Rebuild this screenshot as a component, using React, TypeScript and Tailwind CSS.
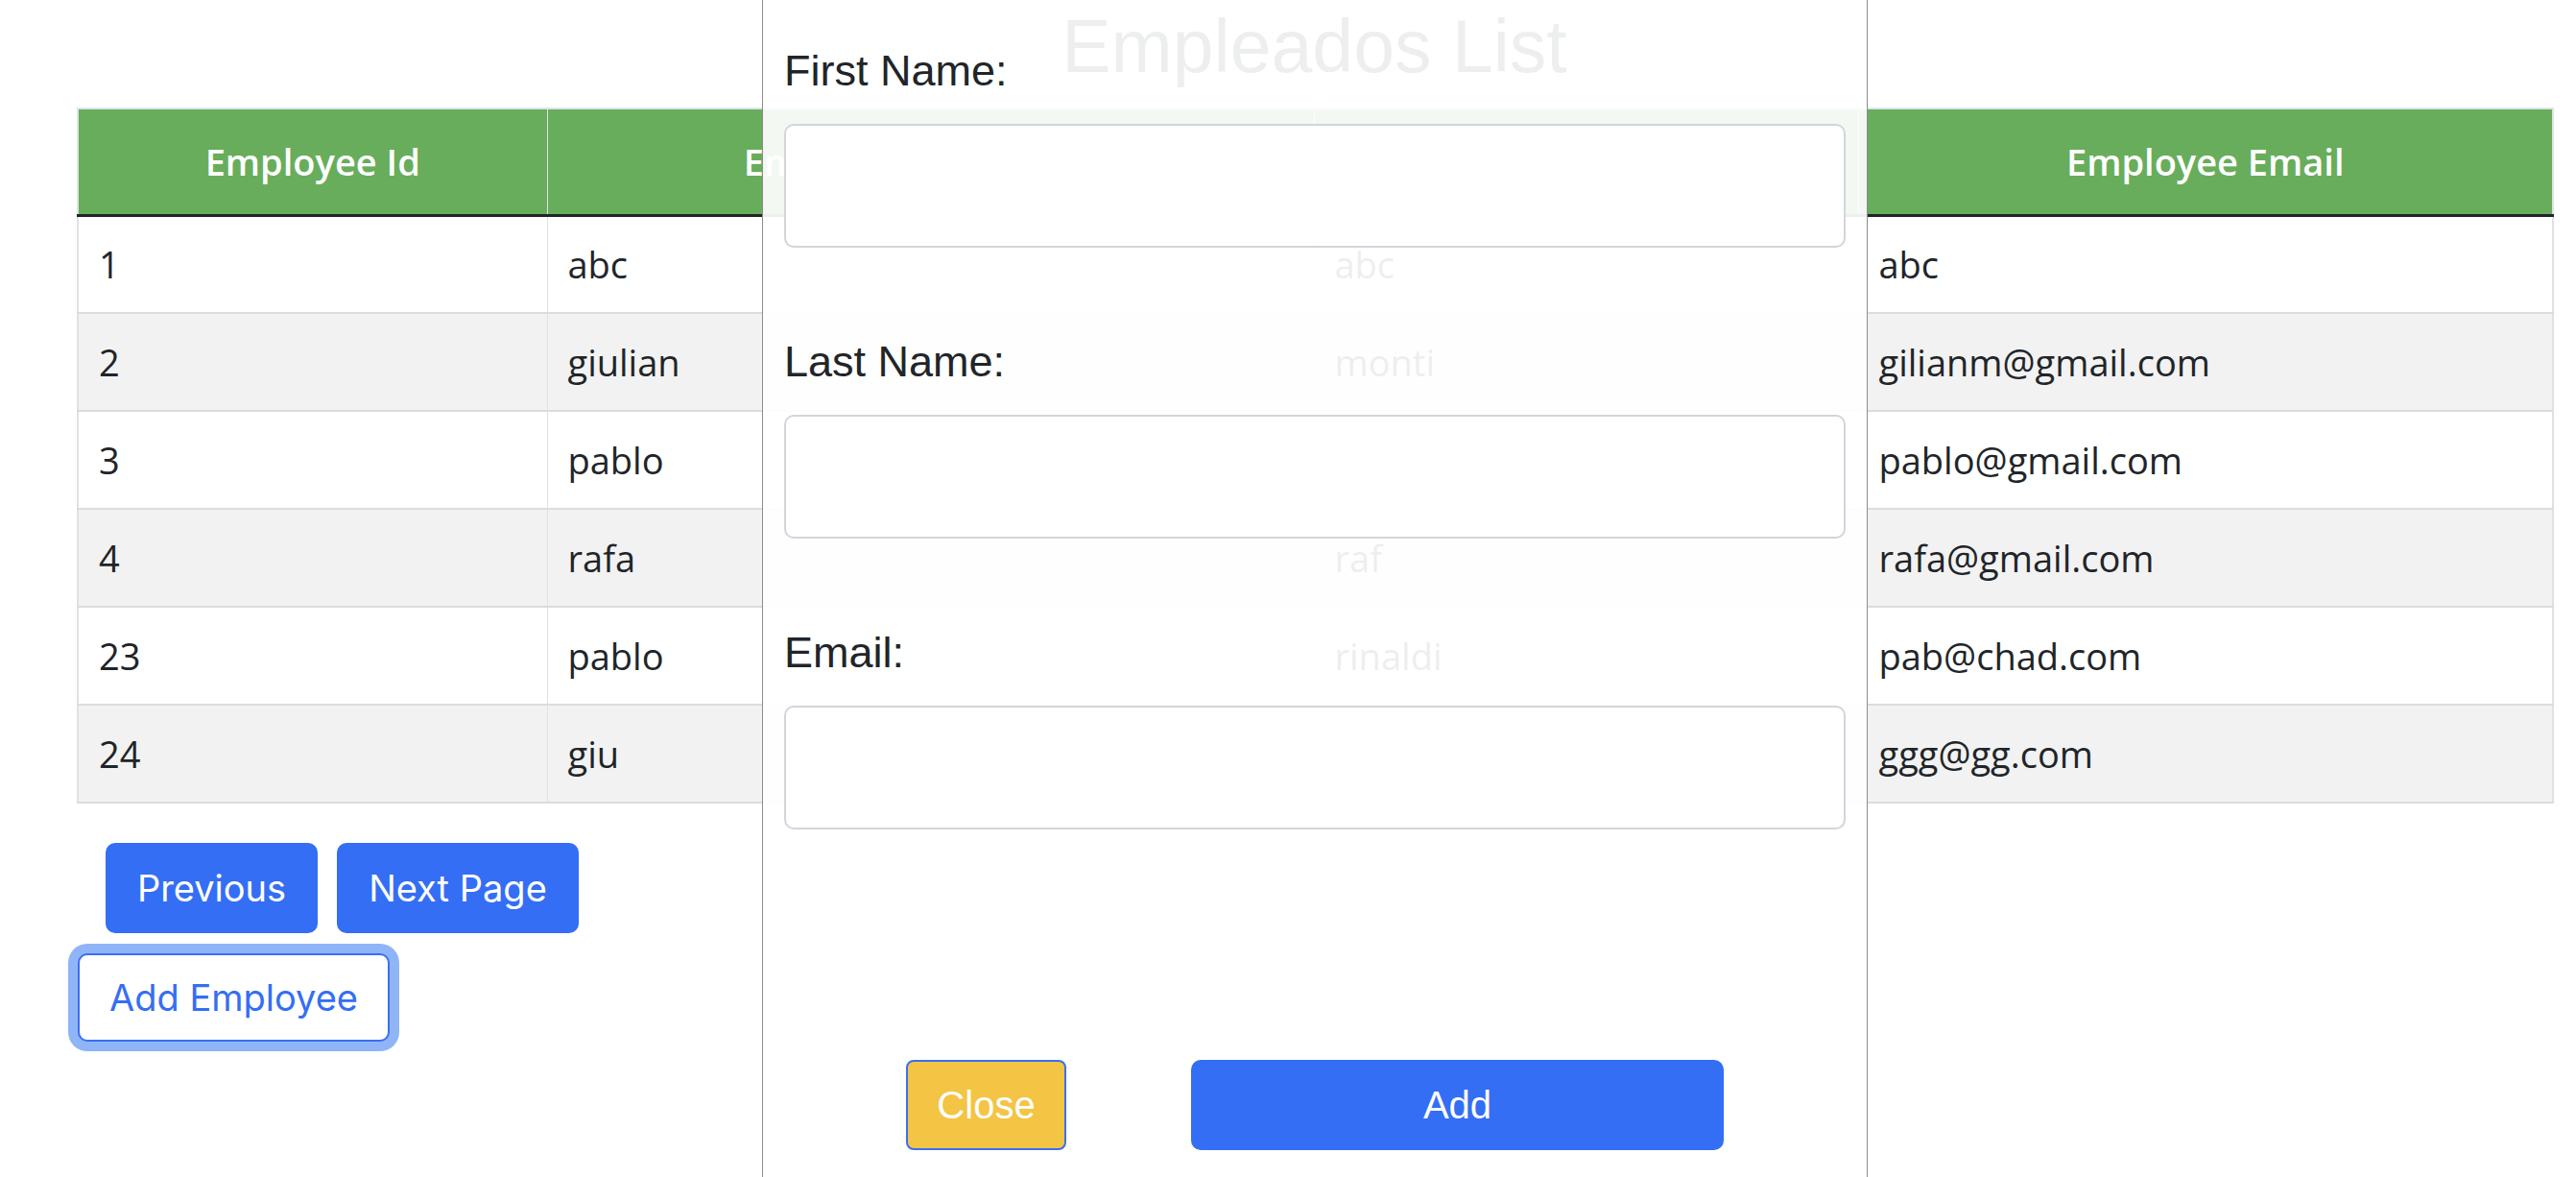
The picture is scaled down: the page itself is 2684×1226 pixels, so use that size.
const employees = [
  { id: 1, first: 'abc', last: 'abc', email: 'abc' },
  { id: 2, first: 'giulian', last: 'monti', email: 'gilianm@gmail.com' },
  { id: 3, first: 'pablo', last: 'perez', email: 'pablo@gmail.com' },
  { id: 4, first: 'rafa', last: 'raf', email: 'rafa@gmail.com' },
  { id: 23, first: 'pablo', last: 'rinaldi', email: 'pab@chad.com' },
  { id: 24, first: 'giu', last: 'rossi', email: 'ggg@gg.com' },
];

function Field({ label }: { label: string }) {
  return (
    <div className="flex flex-col">
      <label className="text-[45px] leading-[52px] text-[#212529]">{label}</label>
      <input
        type="text"
        className="mt-[29px] h-[129px] w-full rounded-[10px] border-2 border-[#d2d6db] bg-white"
      />
    </div>
  );
}

export default function App() {
  return (
    <div className="relative min-h-[1226px] overflow-hidden bg-white">
      <div className="pl-[80px] pr-[25px]">
        <h1 className="h-[112px] pt-[10px] text-center font-['Liberation_Sans',sans-serif] text-[77px] leading-none text-[#212529]">
          Empleados List
        </h1>

        <table className="w-full table-fixed border-collapse border-2 border-[#dee2e6] font-['Open_Sans',sans-serif] text-[38px] text-[#212529]">
          <colgroup>
            <col className="w-[489px]" />
            <col className="w-[799px]" />
            <col className="w-[567px]" />
            <col className="w-[724px]" />
          </colgroup>
          <thead>
            <tr className="bg-[#68ad5c] text-white">
              <th className="h-[111px] border-x border-b-[3px] border-x-[#dee2e6] border-b-[#212529] font-semibold">
                Employee Id
              </th>
              <th className="h-[111px] border-x border-b-[3px] border-x-[#dee2e6] border-b-[#212529] font-semibold">
                Employee First Name
              </th>
              <th className="h-[111px] border-x border-b-[3px] border-x-[#dee2e6] border-b-[#212529] font-semibold">
                Employee Last Name
              </th>
              <th className="h-[111px] border-x border-b-[3px] border-x-[#dee2e6] border-b-[#212529] font-semibold">
                Employee Email
              </th>
            </tr>
          </thead>
          <tbody>
            {employees.map((e, i) => (
              <tr key={e.id} className={i % 2 === 1 ? 'bg-[#f2f2f2]' : 'bg-white'}>
                <td className="h-[102px] border-x border-b-2 border-x-[#dee2e6] border-b-[#dcdcdc] px-[21px]">{e.id}</td>
                <td className="h-[102px] border-x border-b-2 border-x-[#dee2e6] border-b-[#dcdcdc] px-[21px]">{e.first}</td>
                <td className="h-[102px] border-x border-b-2 border-x-[#dee2e6] border-b-[#dcdcdc] px-[21px]">{e.last}</td>
                <td className="h-[102px] border-x border-b-2 border-x-[#dee2e6] border-b-[#dcdcdc] px-[21px]">{e.email}</td>
              </tr>
            ))}
          </tbody>
        </table>

        <div className="mt-[41px] flex gap-[20px] pl-[30px] font-['Inter',sans-serif] text-[38px] text-white">
          <button className="h-[94px] w-[221px] rounded-[10px] bg-[#346ef4]">Previous</button>
          <button className="h-[94px] w-[252px] rounded-[10px] bg-[#346ef4]">Next Page</button>
        </div>

        <div className="mt-[21px] pl-px">
          <button className="h-[92px] w-[325px] rounded-[10px] border-2 border-[#3a6ff3] bg-white font-['Inter',sans-serif] text-[38px] text-[#346ef4] ring-[10px] ring-[#8fb5f8]">
            Add Employee
          </button>
        </div>
      </div>

      {/* modal panel over the list */}
      <div className="absolute top-0 bottom-0 left-[794px] w-[1152px] border-x border-[#8c8c8c] bg-white/[0.92] px-[22px] pt-[48px] font-['Liberation_Sans',sans-serif]">
        <form className="flex flex-col gap-[93px]">
          <Field label="First Name:" />
          <Field label="Last Name:" />
          <Field label="Email:" />
        </form>
        <div className="mt-[240px] flex justify-center gap-[130px] text-[40px] text-white">
          <button className="h-[94px] w-[167px] rounded-[8px] border-2 border-[#3a6ff0] bg-[#f4c444]">Close</button>
          <button className="h-[94px] w-[555px] rounded-[10px] bg-[#346ef4]">Add</button>
        </div>
      </div>
    </div>
  );
}
